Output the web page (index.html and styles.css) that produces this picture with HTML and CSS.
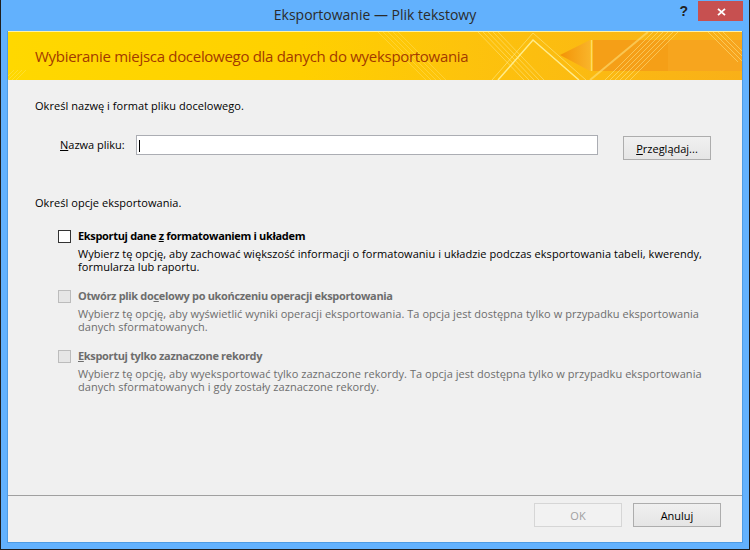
FILE: index.html
```html
<!DOCTYPE html>
<html lang="pl">
<head>
<meta charset="utf-8">
<title>Eksportowanie — Plik tekstowy</title>
<link rel="stylesheet" href="styles.css">
</head>
<body>
<div class="window">
  <div class="titlebar">
    <div class="spacer"></div>
    <div class="title">Eksportowanie — Plik tekstowy</div>
    <div class="controls">
      <span class="help">?</span>
      <span class="close"><svg width="9" height="8" viewBox="0 0 9 8"><path d="M1 0.8 L8 7.2 M8 0.8 L1 7.2" stroke="#fff" stroke-width="1.8" fill="none"/></svg></span>
    </div>
  </div>
  <div class="client">
    <div class="banner">
      <svg class="banner-art" width="734" height="48" viewBox="0 0 734 48">
        <defs>
          <linearGradient id="bg" x1="0" y1="0" x2="1" y2="0">
            <stop offset="0" stop-color="#ffd800"/>
            <stop offset="0.4" stop-color="#ffd000"/>
            <stop offset="0.62" stop-color="#fdc30c"/>
            <stop offset="1" stop-color="#f9b018"/>
          </linearGradient>
          <linearGradient id="head" x1="0" y1="0" x2="1" y2="0">
            <stop offset="0" stop-color="#f39306"/>
            <stop offset="1" stop-color="#f9b42a"/>
          </linearGradient>
        </defs>
        <rect width="734" height="48" fill="url(#bg)"/>
        <g stroke="#fff6b0" stroke-width="1" opacity="0.25">
          <path d="M370 0 L418 48 M375 0 L423 48 M380 0 L428 48 M385 0 L433 48 M390 0 L438 48"/>
          <path d="M0 44 L6 38 M0 48 L10 38 M4 48 L14 38 M8 48 L18 38"/>
        </g>
        <g stroke="#fff6b0" stroke-width="1" opacity="0.4">
          <path d="M470 0 L516 48 M475 0 L521 48 M480 0 L526 48 M485 0 L531 48 M490 0 L536 48"/>
        </g>
        <polygon points="552,23 582,8 582,39" fill="url(#head)"/>
        <rect x="585" y="8" width="149" height="31" fill="#f7a51e"/>
        <rect x="585" y="8" width="75" height="31" fill="#f59f17"/>
        <line x1="583.5" y1="8" x2="583.5" y2="39" stroke="#ffe27a" stroke-width="1.5" opacity="0.8"/>
        <g stroke="#fff3a0" stroke-width="1" opacity="0.45">
          <path d="M645 0 L597 48 M650 0 L602 48 M655 0 L607 48 M660 0 L612 48 M665 0 L617 48 M670 0 L622 48"/>
          <path d="M700 0 L730 30 M705 0 L734 29 M710 0 L734 24 M715 0 L734 19"/>
        </g>
        <path d="M640 0 L582 48" stroke="#ffe680" stroke-width="2" opacity="0.55"/>
        <polyline points="490,48 525,8 571,48" fill="none" stroke="#fff3a0" stroke-width="1.5" opacity="0.85"/>
        <polyline points="484,48 525,1 578,48" fill="none" stroke="#fff3a0" stroke-width="1" opacity="0.5"/>
      </svg>
      <h1 class="banner-title">Wybieranie miejsca docelowego dla danych do wyeksportowania</h1>
    </div>
    <div class="content">
      <p class="section first">Określ nazwę i format pliku docelowego.</p>
      <div class="file-row">
        <label class="file-label"><u>N</u>azwa pliku:</label>
        <div class="file-input"><span class="caret"></span></div>
        <button class="btn browse"><u>P</u>rzeglądaj...</button>
      </div>
      <p class="section options-heading">Określ opcje eksportowania.</p>
      <div class="option first">
        <span class="checkbox"></span>
        <div class="option-text">
          <div class="option-label">Eksportuj dane <u>z</u> formatowaniem i układem</div>
          <div class="option-desc">Wybierz tę opcję, aby zachować większość informacji o formatowaniu i układzie podczas eksportowania tabeli, kwerendy,<br>formularza lub raportu.</div>
        </div>
      </div>
      <div class="option disabled">
        <span class="checkbox"></span>
        <div class="option-text">
          <div class="option-label">Otwórz plik do<u>c</u>elowy po ukończeniu operacji eksportowania</div>
          <div class="option-desc">Wybierz tę opcję, aby wyświetlić wyniki operacji eksportowania. Ta opcja jest dostępna tylko w przypadku eksportowania<br>danych sformatowanych.</div>
        </div>
      </div>
      <div class="option disabled">
        <span class="checkbox"></span>
        <div class="option-text">
          <div class="option-label"><u>E</u>ksportuj tylko zaznaczone rekordy</div>
          <div class="option-desc">Wybierz tę opcję, aby wyeksportować tylko zaznaczone rekordy. Ta opcja jest dostępna tylko w przypadku eksportowania<br>danych sformatowanych i gdy zostały zaznaczone rekordy.</div>
        </div>
      </div>
    </div>
    <div class="footer">
      <button class="btn btn-disabled">OK</button>
      <button class="btn">Anuluj</button>
    </div>
  </div>
</div>
</body>
</html>
```
FILE: styles.css
```css
html, body {
  margin: 0;
  padding: 0;
  background: #62b1fd;
}

.window {
  width: 750px;
  height: 550px;
  box-sizing: border-box;
  background: #62b1fd;
  border: 1px solid #1e1e1e;
  border-top: none;
  padding: 0 6px 6px;
  display: flex;
  flex-direction: column;
  font-family: "Open Sans", "Noto Sans", sans-serif;
  color: #000;
}

.titlebar {
  height: 31px;
  flex: none;
  display: grid;
  grid-template-columns: 1fr auto 1fr;
}

.title {
  font-size: 14px;
  line-height: 30px;
  color: #2b2b2b;
  white-space: nowrap;
}

.controls {
  display: flex;
  justify-content: flex-end;
  align-items: flex-start;
}

.help {
  font-family: "Liberation Sans", sans-serif;
  font-weight: 700;
  font-size: 14px;
  line-height: 14px;
  margin-top: 4px;
  margin-right: 10px;
  color: #222;
}

.close {
  width: 45px;
  height: 20px;
  margin-top: 1px;
  background: #c75050;
  display: flex;
  align-items: center;
  justify-content: center;
  padding-left: 1px;
  padding-top: 1px;
  box-sizing: border-box;
}

.close svg {
  display: block;
}

.client {
  flex: 1;
  background: #f0f0f0;
  border: 1px solid #4d9be3;
  border-top: none;
  display: flex;
  flex-direction: column;
  min-height: 0;
}

.banner {
  height: 49px;
  flex: none;
  box-sizing: border-box;
  border-top: 1px solid #fff2a0;
  position: relative;
  overflow: hidden;
}

.banner-art {
  position: absolute;
  left: 0;
  top: 0;
  display: block;
}

.banner-title {
  position: relative;
  margin: 0;
  padding: 14px 0 0 27px;
  font-size: 15px;
  line-height: 20px;
  font-weight: 400;
  letter-spacing: -0.3px;
  color: #a33a00;
  white-space: nowrap;
}

.content {
  flex: 1;
  padding-left: 27px;
}

.section {
  margin: 0;
  font-size: 11px;
  line-height: 13px;
  letter-spacing: 0.05px;
}

.section.first {
  margin-top: 19px;
}

.file-row {
  display: flex;
  align-items: flex-start;
  margin-top: 23px;
  margin-left: 25px;
}

.file-label {
  width: 76px;
  flex: none;
  margin-top: 3px;
  font-size: 11px;
  line-height: 13px;
}

.file-input {
  width: 462px;
  height: 20px;
  flex: none;
  box-sizing: border-box;
  border: 1px solid #abadb3;
  background: #fff;
  display: flex;
  align-items: flex-start;
  padding: 4px 0 0 2px;
}

.caret {
  width: 1px;
  height: 12px;
  background: #000;
}

.btn {
  width: 88px;
  height: 24px;
  box-sizing: border-box;
  border: 1px solid #adadad;
  background: linear-gradient(#f0f0f0, #e5e5e5);
  font-family: "Open Sans", "Noto Sans", sans-serif;
  font-size: 11px;
  line-height: 13px;
  color: #000;
  padding: 0;
  margin: 0;
  flex: none;
}

.browse {
  margin-left: 25px;
  margin-top: 1px;
}

.btn-disabled {
  border-color: #d6d6d6;
  background: #f2f2f2;
  color: #a0a0a0;
}

.options-heading {
  margin-top: 36px;
}

.option {
  display: flex;
  align-items: flex-start;
  margin-left: 23px;
  margin-top: 16px;
}

.option.first {
  margin-top: 20px;
}

.checkbox {
  width: 13px;
  height: 13px;
  flex: none;
  box-sizing: border-box;
  border: 1px solid #333;
  background: #fff;
  margin-top: 1px;
  margin-right: 7px;
}

.option-label {
  font-size: 11px;
  line-height: 13px;
  font-weight: 700;
  letter-spacing: -0.33px;
  white-space: nowrap;
}

.option-desc {
  margin-top: 5px;
  font-size: 11px;
  line-height: 13px;
  letter-spacing: 0.05px;
  white-space: nowrap;
}

.option.disabled .checkbox {
  border-color: #bcbcbc;
  background: #e6e6e6;
}

.option.disabled .option-label,
.option.disabled .option-desc {
  color: #6d6d6d;
}

.footer {
  height: 39px;
  flex: none;
  border-top: 1px solid #a0a0a0;
  display: flex;
  justify-content: flex-end;
  align-items: flex-start;
  gap: 11px;
  padding: 7px 21px 0 0;
}
```
